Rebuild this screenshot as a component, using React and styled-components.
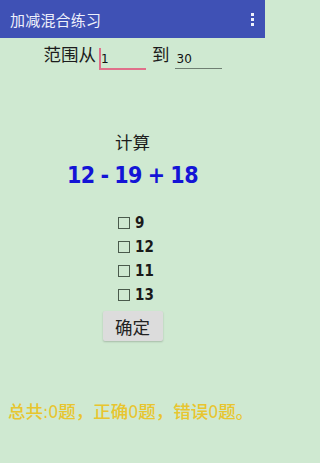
import React, { useState } from "react";
import styled, { createGlobalStyle } from "styled-components";

const GlobalStyle = createGlobalStyle`
  html, body {
    margin: 0;
    padding: 0;
    background: #cfe9d1;
  }
  body {
    font-family: "Roboto", "Noto Sans CJK SC", sans-serif;
  }
`;

const options = ["9", "12", "11", "13"];

const App = () => {
  const [from, setFrom] = useState("1");
  const [to, setTo] = useState("30");
  const [checked, setChecked] = useState([]);

  const toggle = (value) => {
    setChecked((prev) =>
      prev.includes(value) ? prev.filter((v) => v !== value) : [...prev, value]
    );
  };

  return (
    <Screen>
      <GlobalStyle />
      <AppBar>
        <Title>加减混合练习</Title>
        <MenuDots>
          <Dot />
          <Dot />
          <Dot />
        </MenuDots>
      </AppBar>

      <RangeRow>
        <RangeLabel>范围从</RangeLabel>
        <Field $active>
          <Caret />
          <FieldInput value={from} onChange={(e) => setFrom(e.target.value)} />
        </Field>
        <RangeLabel>到</RangeLabel>
        <Field>
          <FieldInput value={to} onChange={(e) => setTo(e.target.value)} />
        </Field>
      </RangeRow>

      <Caption>计算</Caption>
      <Expression>12 - 19 + 18</Expression>

      <OptionList>
        {options.map((opt) => (
          <OptionRow key={opt} onClick={() => toggle(opt)}>
            <Box>{checked.includes(opt) ? "✓" : ""}</Box>
            <OptionText>{opt}</OptionText>
          </OptionRow>
        ))}
      </OptionList>

      <ConfirmButton>确定</ConfirmButton>

      <Score>总共:0题，正确0题，错误0题。</Score>
    </Screen>
  );
};

export default App;

const Screen = styled.div`
  width: 265px;
  height: 463px;
  background: #cfe9d1;
  display: flex;
  flex-direction: column;
  align-items: center;
  overflow: hidden;
`;

const AppBar = styled.div`
  align-self: stretch;
  height: 38px;
  background: #3f51b5;
  display: flex;
  align-items: center;
  justify-content: space-between;
  padding: 0 10px 0 10px;
`;

const Title = styled.div`
  color: #eef0fb;
  font-size: 15px;
  letter-spacing: 0.2px;
`;

const MenuDots = styled.div`
  display: flex;
  flex-direction: column;
  gap: 2px;
  padding-right: 1px;
`;

const Dot = styled.span`
  width: 3px;
  height: 3px;
  background: #eef0fb;
`;

const RangeRow = styled.div`
  display: flex;
  align-items: flex-end;
  margin-top: 6px;
  margin-left: 0px;
  height: 26px;
`;

const RangeLabel = styled.span`
  font-size: 17.5px;
  color: #1c1c1c;
  line-height: 22px;
  margin-right: 3px;
  padding-bottom: 4px;
  &:nth-of-type(2) {
    margin-left: 6px;
    margin-right: 5px;
  }
`;

const Field = styled.div`
  position: relative;
  width: 47px;
  height: 24px;
  border-bottom: ${(p) => (p.$active ? "2px solid #e0708a" : "1px solid #6f7f72")};
  margin-bottom: ${(p) => (p.$active ? "0" : "1px")};
`;

const Caret = styled.span`
  position: absolute;
  left: 0;
  top: 4px;
  bottom: 0;
  width: 2px;
  background: #e0708a;
`;

const FieldInput = styled.input`
  width: 100%;
  height: 100%;
  border: none;
  outline: none;
  background: transparent;
  font-family: "DejaVu Sans", sans-serif;
  font-size: 12px;
  color: #111;
  padding: 6px 0 0 2px;
  box-sizing: border-box;
`;

const Caption = styled.div`
  margin-top: 59px;
  font-size: 17.5px;
  color: #1c1c1c;
`;

const Expression = styled.div`
  margin-top: 8px;
  font-family: "DejaVu Sans Condensed", "DejaVu Sans", sans-serif;
  font-stretch: condensed;
  font-weight: bold;
  font-size: 23px;
  color: #1414d6;
  letter-spacing: -0.5px;
  word-spacing: -1px;
`;

const OptionList = styled.div`
  margin-top: 26px;
  margin-left: 10px;
  display: flex;
  flex-direction: column;
  gap: 6px;
`;

const OptionRow = styled.div`
  display: flex;
  align-items: center;
  gap: 5px;
  height: 18px;
  cursor: pointer;
`;

const Box = styled.span`
  width: 10px;
  height: 10px;
  border: 1px solid #4a5a4c;
  font-size: 9px;
  line-height: 10px;
  text-align: center;
`;

const OptionText = styled.span`
  font-family: "DejaVu Sans Condensed", "DejaVu Sans", sans-serif;
  font-size: 15px;
  font-weight: 600;
  color: #1a1a1a;
  width: 22px;
`;

const ConfirmButton = styled.button`
  margin-top: 7px;
  width: 60px;
  height: 30px;
  border: none;
  border-radius: 2px;
  background: #dcdcdc;
  box-shadow: 0 1px 2px rgba(0, 0, 0, 0.2);
  font-family: "Noto Sans CJK SC", sans-serif;
  font-size: 17.5px;
  color: #222;
  padding: 0;
  cursor: pointer;
`;

const Score = styled.div`
  align-self: stretch;
  margin-top: 57px;
  padding-left: 8px;
  font-family: "DejaVu Sans Condensed", "Noto Sans CJK SC", sans-serif;
  font-size: 17.5px;
  font-weight: 500;
  color: #e8c52e;
  white-space: nowrap;
`;
